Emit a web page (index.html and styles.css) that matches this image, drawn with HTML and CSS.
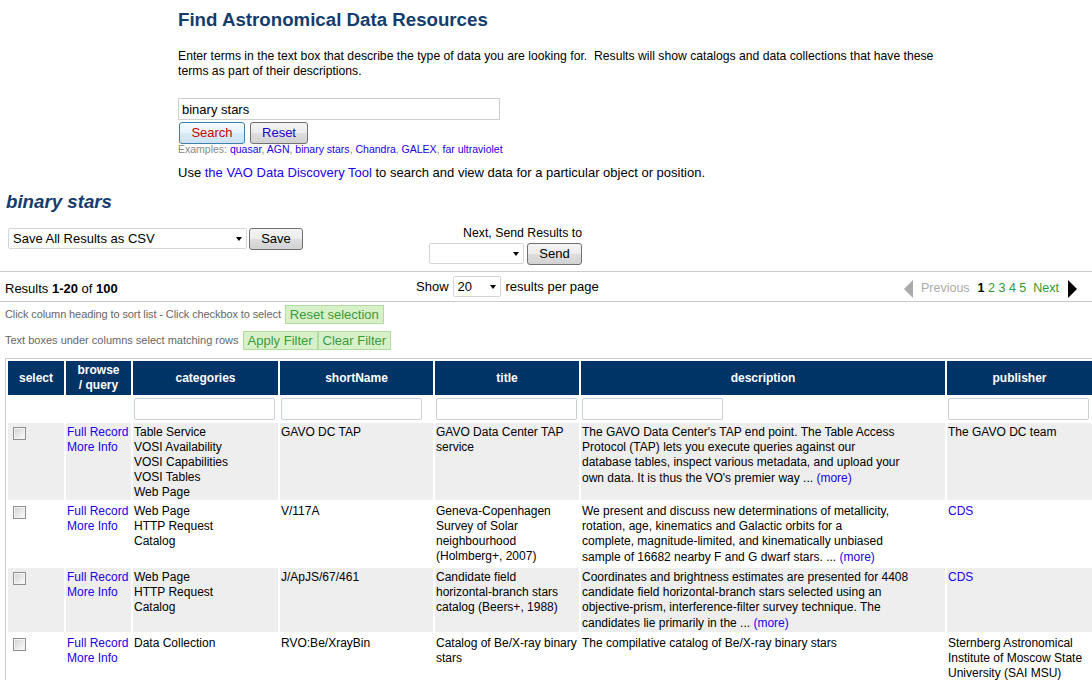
FILE: index.html
```html
<!DOCTYPE html>
<html>
<head>
<meta charset="utf-8">
<title>Find Astronomical Data Resources</title>
<link rel="stylesheet" href="styles.css">
</head>
<body>
<div class="top">
  <h1 class="page-title">Find Astronomical Data Resources</h1>
  <p class="intro">Enter terms in the text box that describe the type of data you are looking for.&nbsp; Results will show catalogs and data collections that have these terms as part of their descriptions.</p>
  <form class="search-form">
    <input class="query" type="text" value="binary stars">
    <div class="search-buttons">
      <button type="button" class="btn btn-search">Search</button>
      <button type="button" class="btn btn-reset">Reset</button>
    </div>
    <div class="examples">Examples: <a href="#">quasar</a>, <a href="#">AGN</a>, <a href="#">binary stars</a>, <a href="#">Chandra</a>, <a href="#">GALEX</a>, <a href="#">far ultraviolet</a></div>
  </form>
  <p class="vao">Use <a href="#">the VAO Data Discovery Tool</a> to search and view data for a particular object or position.</p>
</div>

<h2 class="result-title">binary stars</h2>

<div class="actions">
  <div class="save-group">
    <span class="select-wrap"><select class="select select-save"><option>Save All Results as CSV</option></select></span>
    <button type="button" class="btn btn-save">Save</button>
  </div>
  <div class="send-group">
    <div class="send-label">Next, Send Results to</div>
    <div class="send-row">
      <span class="select-wrap"><select class="select select-send"><option></option></select></span>
      <button type="button" class="btn btn-send">Send</button>
    </div>
  </div>
</div>

<hr class="rule rule-top">
<div class="results-bar">
  <div class="count">Results <b>1-20</b> of <b>100</b></div>
  <div class="show">Show <span class="select-wrap select-show-wrap"><select class="select select-show"><option>20</option></select></span> results per page</div>
  <div class="pager">
    <span class="tri tri-left"></span>
    <span class="prev">Previous</span>
    <span class="pages"><b class="current">1</b> <a href="#">2</a> <a href="#">3</a> <a href="#">4</a> <a href="#">5</a></span>
    <a href="#" class="next">Next</a>
    <span class="tri tri-right"></span>
  </div>
</div>
<hr class="rule">

<div class="hints">
  <div class="hint-line"><span class="hint-tight">Click column heading to sort list - Click checkbox to select</span> <button type="button" class="gbtn">Reset selection</button></div>
  <div class="hint-line">Text boxes under columns select matching rows <button type="button" class="gbtn">Apply Filter</button><button type="button" class="gbtn gbtn-join">Clear Filter</button></div>
</div>

<div class="table-wrap">
<table class="results">
  <thead>
    <tr class="head">
      <th class="w-select">select</th>
      <th class="w-browse">browse<br>/ query</th>
      <th class="w-cat">categories</th>
      <th class="w-short">shortName</th>
      <th class="w-title">title</th>
      <th class="w-desc">description</th>
      <th class="w-pub">publisher</th>
    </tr>
    <tr class="filter">
      <td></td>
      <td></td>
      <td><input type="text"></td>
      <td><input type="text"></td>
      <td><input type="text"></td>
      <td><input type="text"></td>
      <td><input type="text"></td>
    </tr>
  </thead>
  <tbody>
    <tr class="odd">
      <td><input type="checkbox" class="check"></td>
      <td><a href="#">Full Record</a><br><a href="#">More Info</a></td>
      <td>Table Service<br>VOSI Availability<br>VOSI Capabilities<br>VOSI Tables<br>Web Page</td>
      <td>GAVO DC TAP</td>
      <td>GAVO Data Center TAP<br>service</td>
      <td>The GAVO Data Center's TAP end point. The Table Access<br>Protocol (TAP) lets you execute queries against our<br>database tables, inspect various metadata, and upload your<br>own data. It is thus the VO's premier way ... <a href="#" class="more">(more)</a></td>
      <td>The GAVO DC team</td>
    </tr>
    <tr>
      <td><input type="checkbox" class="check"></td>
      <td><a href="#">Full Record</a><br><a href="#">More Info</a></td>
      <td>Web Page<br>HTTP Request<br>Catalog</td>
      <td>V/117A</td>
      <td>Geneva-Copenhagen<br>Survey of Solar<br>neighbourhood<br>(Holmberg+, 2007)</td>
      <td>We present and discuss new determinations of metallicity,<br>rotation, age, kinematics and Galactic orbits for a<br>complete, magnitude-limited, and kinematically unbiased<br>sample of 16682 nearby F and G dwarf stars. ... <a href="#" class="more">(more)</a></td>
      <td><a href="#">CDS</a></td>
    </tr>
    <tr class="odd">
      <td><input type="checkbox" class="check"></td>
      <td><a href="#">Full Record</a><br><a href="#">More Info</a></td>
      <td>Web Page<br>HTTP Request<br>Catalog</td>
      <td>J/ApJS/67/461</td>
      <td>Candidate field<br>horizontal-branch stars<br>catalog (Beers+, 1988)</td>
      <td>Coordinates and brightness estimates are presented for 4408<br>candidate field horizontal-branch stars selected using an<br>objective-prism, interference-filter survey technique. The<br>candidates lie primarily in the ... <a href="#" class="more">(more)</a></td>
      <td><a href="#">CDS</a></td>
    </tr>
    <tr>
      <td><input type="checkbox" class="check"></td>
      <td><a href="#">Full Record</a><br><a href="#">More Info</a></td>
      <td>Data Collection</td>
      <td>RVO:Be/XrayBin</td>
      <td>Catalog of Be/X-ray binary<br>stars</td>
      <td>The compilative catalog of Be/X-ray binary stars</td>
      <td>Sternberg Astronomical<br>Institute of Moscow State<br>University (SAI MSU)</td>
    </tr>
  </tbody>
</table>
</div>
</body>
</html>
```

FILE: styles.css
```css
html {
  overflow: hidden;
}

body {
  margin: 0;
  font-family: "Liberation Sans", Arial, sans-serif;
  font-size: 12px;
  line-height: 15px;
  color: #000;
  background: #fff;
}

a {
  color: #2200ee;
  text-decoration: none;
}

/* ---------- top search area ---------- */
.top {
  padding-left: 178px;
}

.page-title {
  margin: 9px 0 0;
  font-size: 18.7px;
  line-height: 21px;
  font-weight: bold;
  color: #143c6d;
}

.intro {
  margin: 19px 0 0;
  width: 770px;
  font-size: 12.2px;
}

.search-form {
  margin: 19px 0 0;
}

.query {
  display: block;
  box-sizing: border-box;
  width: 322px;
  height: 22px;
  margin: 0;
  padding: 0 3px;
  border: 1px solid #cfcfcf;
  font: 13px "Liberation Sans", Arial, sans-serif;
  color: #000;
}

.search-buttons {
  display: flex;
  gap: 5px;
  margin: 2px 0 0 1px;
}

.btn {
  box-sizing: border-box;
  height: 22px;
  margin: 0;
  padding: 0;
  border: 1px solid #707070;
  border-radius: 3px;
  background: linear-gradient(#f4f4f4 0%, #ececec 50%, #dedede 51%, #d2d2d2 100%);
  font: 13px/20px "Liberation Sans", Arial, sans-serif;
  color: #000;
  text-align: center;
}

.btn-search {
  width: 66px;
  color: #cc0000;
  border-color: #3c7fb1;
  background: linear-gradient(#f3fafe 0%, #e6f3fb 50%, #d8ebf7 51%, #cde3f1 100%);
}

.btn-reset {
  width: 58px;
  color: #2200cc;
}

.examples {
  font-size: 10.5px;
  line-height: 10px;
  color: #888;
}

.examples a {
  color: #2200ee;
}

.vao {
  margin: 11px 0 0;
  font-size: 13px;
}

/* ---------- result heading & actions ---------- */
.result-title {
  margin: 11px 0 0 6px;
  font-size: 18.7px;
  line-height: 21px;
  font-weight: bold;
  font-style: italic;
  color: #143c6d;
}

.actions {
  display: flex;
  align-items: flex-start;
  margin-top: 14px;
  padding-left: 8px;
}

.save-group {
  display: flex;
  align-items: flex-start;
  gap: 2px;
  width: 421px;
  margin-top: 2px;
}

.select-wrap {
  position: relative;
  display: inline-block;
}

.select-wrap::after {
  content: "";
  position: absolute;
  right: 5px;
  top: 9px;
  width: 0;
  height: 0;
  border-style: solid;
  border-width: 4px 3.5px 0 3.5px;
  border-color: #000 transparent transparent transparent;
  pointer-events: none;
}

.select {
  display: block;
  -webkit-appearance: none;
  appearance: none;
  box-sizing: border-box;
  height: 21px;
  margin: 0;
  padding: 0 16px 0 4px;
  border: 1px solid #d3d6da;
  border-radius: 2px;
  background: #fff;
  font: 13px "Liberation Sans", Arial, sans-serif;
  color: #000;
}

.select-save {
  width: 239px;
}

.btn-save {
  width: 54px;
}

.send-group {
  display: flex;
  flex-direction: column;
  align-items: flex-end;
}

.send-label {
  font-size: 12.3px;
}

.send-row {
  display: flex;
  gap: 3px;
  margin-top: 2px;
}

.select-send {
  width: 95px;
}

.btn-send {
  width: 55px;
}

/* ---------- rules & results bar ---------- */
.rule {
  height: 0;
  margin: 0;
  border: 0;
  border-top: 1px solid #cccccc;
}

.rule-top {
  margin-top: 6px;
}

.results-bar {
  display: flex;
  align-items: center;
  height: 29px;
  padding: 0 15px 0 5px;
  font-size: 13px;
}

.count {
  width: 411px;
  margin-top: 4px;
}

.show {
  display: flex;
  align-items: center;
}

.select-show-wrap {
  margin: 0 5px 0 4px;
}

.select-show {
  width: 48px;
}

.pager {
  margin-left: auto;
  margin-top: 4px;
  display: flex;
  align-items: center;
  font-size: 12.5px;
}

.tri {
  width: 0;
  height: 0;
  border-top: 9px solid transparent;
  border-bottom: 9px solid transparent;
}

.tri-left {
  border-right: 9px solid #aaaaaa;
  margin-right: 8px;
}

.tri-right {
  border-left: 9px solid #000;
  margin-left: 9px;
}

.prev {
  color: #aaaaaa;
  margin-right: 8px;
}

.current {
  color: #000;
}

.pager a {
  color: #339933;
}

.pager .next {
  margin-left: 7px;
}

/* ---------- hints ---------- */
.hints {
  padding-left: 5px;
  font-size: 11px;
  color: #666;
}

.hint-line {
  display: flex;
  align-items: center;
  height: 19px;
  margin-top: 3px;
}

.hint-line + .hint-line {
  margin-top: 7px;
}

.hint-tight {
  letter-spacing: -0.1px;
}

.gbtn {
  box-sizing: border-box;
  height: 19px;
  margin: 0 0 0 4px;
  padding: 0 4px;
  border: 1px solid #b3dca0;
  background: #d6f0c8;
  font: 13px/17px "Liberation Sans", Arial, sans-serif;
  color: #3d9a3d;
}

.gbtn-join {
  margin-left: 0;
}

/* ---------- table ---------- */
.table-wrap {
  overflow: hidden;
  margin-top: 8px;
  padding-left: 5px;
}

.results {
  table-layout: fixed;
  width: 1090px;
  border: 1px solid #cccccc;
  border-spacing: 2px;
}

.results th {
  box-sizing: border-box;
  padding: 2px 1px;
  background: #003366;
  color: #fff;
  font-weight: bold;
  text-align: center;
  vertical-align: middle;
}

.w-select { width: 56px; }
.w-browse { width: 65px; }
.w-cat { width: 145px; }
.w-short { width: 153px; }
.w-title { width: 144px; }
.w-desc { width: 364px; }
.w-pub { width: 145px; }

.results td {
  padding: 2px 0 0 1px;
  vertical-align: top;
  text-align: left;
}

.results .filter td {
  padding: 1px 0 1px 1px;
}

.results tr.odd td {
  background: #eeeeee;
}

.filter input {
  display: block;
  box-sizing: border-box;
  width: 141px;
  height: 22px;
  margin: 0;
  border: 1px solid #c9d0d8;
  border-radius: 2px;
  background: #fff;
}

.check {
  display: block;
  -webkit-appearance: none;
  appearance: none;
  box-sizing: border-box;
  width: 13px;
  height: 13px;
  margin: 2px 3px 3px 4px;
  border: 1px solid #8f8f8f;
  background: linear-gradient(135deg, #cfcfcf 0%, #f0f0f0 70%, #fbfbfb 100%);
  box-shadow: inset 0 0 0 1px #f4f4f4;
}

.more {
  line-height: 17px;
}
```
